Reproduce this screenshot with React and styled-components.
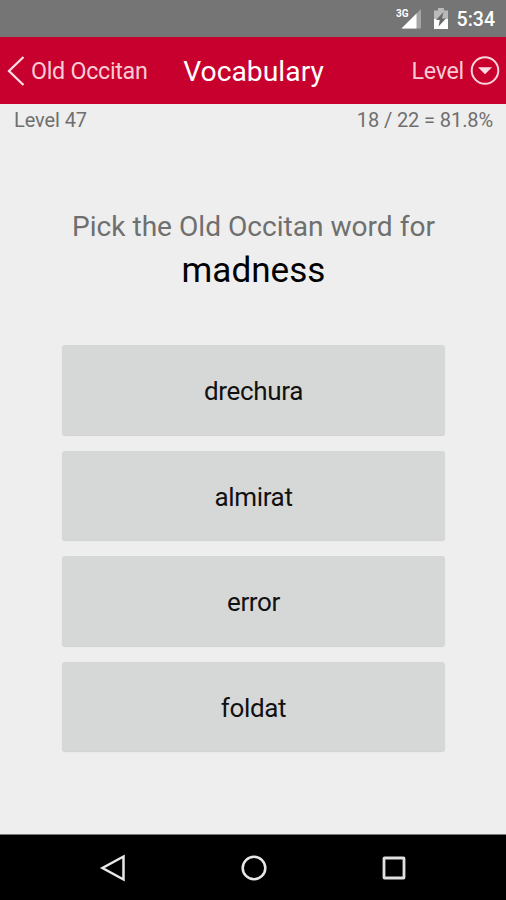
import React from "react";
import styled, { createGlobalStyle } from "styled-components";

const GlobalStyle = createGlobalStyle`
  * {
    box-sizing: border-box;
  }

  body {
    margin: 0;
    background-color: #eeeeee;
    font-family: Roboto, sans-serif;
  }
`;

const Screen = styled.div`
  width: 100%;
  height: 100vh;
  display: flex;
  flex-direction: column;
  background-color: #eeeeee;
  overflow: hidden;
`;

const StatusBar = styled.div`
  height: 37px;
  display: flex;
  flex-shrink: 0;
  align-items: center;
  justify-content: flex-end;
  padding-right: 11px;
  padding-top: 1px;
  background-color: #757575;

  svg {
    display: block;
  }
`;

const Battery = styled.span`
  margin-left: 12px;
`;

const Time = styled.span`
  margin-left: 9px;
  padding-top: 2px;
  font-size: 19.5px;
  line-height: 24px;
  font-weight: 500;
  color: #ffffff;
`;

const Header = styled.header`
  height: 67px;
  flex-shrink: 0;
  display: grid;
  grid-template-columns: 1fr auto 1fr;
  align-items: center;
  padding: 0 6px 0 7px;
  background-color: #c8002d;
`;

const HeaderButton = styled.button`
  display: flex;
  align-items: center;
  justify-self: ${props => props.$side};
  gap: 6px;
  padding: 0;
  border: none;
  background-color: transparent;
  font-family: inherit;
  font-size: 23.3px;
  line-height: 28px;
  letter-spacing: -0.3px;
  color: #f7ccd5;
  cursor: pointer;
`;

const Title = styled.h1`
  margin: 2px 0 0;
  font-size: 28.3px;
  line-height: 34px;
  font-weight: 400;
  color: #ffffff;
`;

const Progress = styled.div`
  display: flex;
  flex-shrink: 0;
  justify-content: space-between;
  padding: 4px 13px 0 14px;
  font-size: 20px;
  line-height: 24px;
  letter-spacing: -0.1px;
  color: #6f6f6f;
`;

const Question = styled.p`
  margin: 77px 0 0 1px;
  text-align: center;
  font-size: 28.1px;
  line-height: 36px;
  color: #6f6f6f;
`;

const Word = styled.h2`
  margin: 3px 0 0 1px;
  text-align: center;
  font-size: 35.1px;
  line-height: 44px;
  font-weight: 400;
  color: #000000;
`;

const Answers = styled.div`
  flex: 1;
  display: flex;
  flex-direction: column;
  gap: 16px;
  padding: 53px 61px 0 62px;
`;

const Answer = styled.button`
  height: 89.6px;
  padding: 3px 0 0;
  border: none;
  border-radius: 3px;
  background-color: #d6d8d7;
  box-shadow: 0 1px 1px rgba(0, 0, 0, 0.12);
  font-family: inherit;
  font-size: 26px;
  line-height: 32px;
  letter-spacing: -0.35px;
  color: #111111;
  cursor: pointer;
`;

const NavBar = styled.nav`
  height: 66px;
  flex-shrink: 0;
  display: flex;
  align-items: center;
  justify-content: center;
  gap: 112.5px;
  padding-left: 1px;
  border-top: 1px solid #777777;
  background-color: #000000;

  svg {
    display: block;
  }
`;

const SignalIcon = () => (
  <svg width="26" height="22" viewBox="0 0 26 22">
    <text x="0" y="8.6" fontSize="10" fontWeight="700" fill="#ffffff">
      3G
    </text>
    <path d="M25 1v19.5H5.5z" fill="#a6a6a6" />
    <path d="M20.500 5.500v15h-15z" fill="#ffffff" />
  </svg>
);

const BatteryIcon = () => (
  <svg width="14" height="22" viewBox="0 0 14 22">
    <path d="M0 2.500h4V0h6v2.500h4V11H0z" fill="#b9b9b9" />
    <path d="M0 11h14v10H0z" fill="#ffffff" />
    <path d="M9.500 4L2 12h3.800L4.500 18.500l7.500-8H8z" fill="#6a6a6a" />
  </svg>
);

const BackChevron = () => (
  <svg width="18" height="30" viewBox="0 0 18 30" fill="none">
    <path d="M16.500 1L2 15l14.500 14" stroke="#fbdde3" strokeWidth="2.3" />
  </svg>
);

const DropdownIcon = () => (
  <svg width="30" height="30" viewBox="0 0 30 30" fill="none">
    <circle cx="15" cy="14.500" r="13.3" stroke="#f9d6dd" strokeWidth="2" />
    <path d="M8 11.300h14L15 18.300z" fill="#fbdde3" />
  </svg>
);

const words = ["drechura", "almirat", "error", "foldat"];

const App = () => {
  return (
    <Screen>
      <GlobalStyle />
      <StatusBar>
        <SignalIcon />
        <Battery>
          <BatteryIcon />
        </Battery>
        <Time>5:34</Time>
      </StatusBar>
      <Header>
        <HeaderButton $side="start">
          <BackChevron />
          Old Occitan
        </HeaderButton>
        <Title>Vocabulary</Title>
        <HeaderButton $side="end">
          Level
          <DropdownIcon />
        </HeaderButton>
      </Header>
      <Progress>
        <span>Level 47</span>
        <span>18 / 22 = 81.8%</span>
      </Progress>
      <Question>Pick the Old Occitan word for</Question>
      <Word>madness</Word>
      <Answers>
        {words.map(word => (
          <Answer key={word}>{word}</Answer>
        ))}
      </Answers>
      <NavBar>
        <svg width="28" height="28" viewBox="0 0 28 28" fill="none">
          <path
            d="M24.500 2.500v23L3.500 14z"
            stroke="#e8e8e8"
            strokeWidth="2.5"
          />
        </svg>
        <svg width="28" height="28" viewBox="0 0 28 28" fill="none">
          <circle cx="14" cy="14" r="11.3" stroke="#e8e8e8" strokeWidth="2.5" />
        </svg>
        <svg width="28" height="28" viewBox="0 0 28 28" fill="none">
          <rect
            x="4"
            y="4"
            width="20"
            height="20"
            rx="0.5"
            stroke="#e0e0e0"
            strokeWidth="2.8"
          />
        </svg>
      </NavBar>
    </Screen>
  );
};

export default App;
